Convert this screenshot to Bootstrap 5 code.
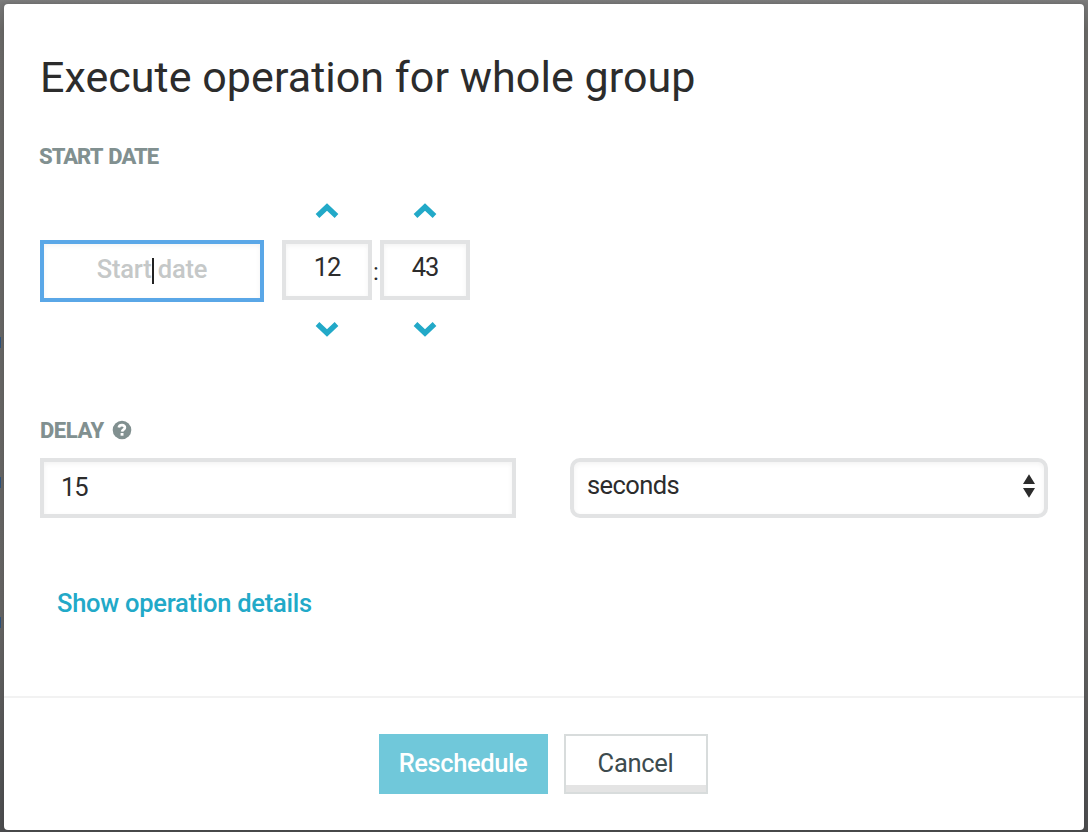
<!DOCTYPE html>
<html lang="en">
<head>
<meta charset="utf-8">
<meta name="viewport" content="width=device-width, initial-scale=1">
<title>Execute operation for whole group</title>
<link href="https://cdn.jsdelivr.net/npm/bootstrap@5.3.0/dist/css/bootstrap.min.css" rel="stylesheet">
<style>
  body { height: 832px; overflow: hidden; padding: 4px 4px 2px; font-family: Roboto, "Liberation Sans", sans-serif; font-size: 25.5px; color: #2c2c2c;
    background: linear-gradient(#2d5079, #2d5079) 0 337px / 1px 11px no-repeat, linear-gradient(#2d5079, #2d5079) 0 477px / 1px 11px no-repeat, linear-gradient(#2d5079, #2d5079) 0 617px / 1px 11px no-repeat,
      linear-gradient(#7c7c7c 0, #777 4px, #6a6967 30px, #656463 75%, #4b4c4e 100%); }
  .modal-content { height: 826px; border: 0; border-radius: 4px; background: #fff; box-shadow: 0 0 5px rgba(0,0,0,.15); }
  .modal-body { padding: 0 36px; }
  .modal-footer { height: 134px; border-top: 2px solid #f2f2f2; padding: 0 2px 0 0; gap: 16px; }
  .modal-footer > * { margin: 0; }
  .modal-title { margin-top: 49px; font-size: 43px; font-weight: 400; line-height: 48px; white-space: nowrap; }

  .section-label { font-size: 22px; font-weight: 800; line-height: 26px; color: #819090; }
  .start-label { margin: 43px 0 0 -1px; }
  .delay-label { margin-top: 77px; }
  .help { margin: -1px 0 1px 8px; }

  .form-control, .form-select { height: 60px; border: 4px solid #e2e3e4; border-radius: 0; color: #2c2c2c; font-size: inherit; line-height: 50px; padding: 0; background: #fff; box-shadow: inset 0 2px 5px rgba(0,0,0,.05); }
  .start-row { margin-top: 32px; height: 139px; }
  .date-box { width: 224px; height: 62px; margin-top: 38px; border-color: #5aa7e7; color: #c5c8c8; line-height: 51px; font-weight: 500; letter-spacing: -.2px; }
  .caret-bar { width: 2px; height: 26px; background: #222; left: 108px; top: 14px; }
  .time-col { width: 90px; }
  .date-box + .time-col { margin-left: 18px; }
  .time-box { width: 90px; margin: 21px 0 20px; line-height: 47px; }
  .chev { width: 24px; height: 16px; margin-top: 1px; display: block; flex: none; }
  .chev path { fill: none; stroke: #22a9c8; stroke-width: 5.4; }
  .colon { width: 8px; margin-top: 54px; line-height: 32px; font-size: 24px; }

  .delay-row { margin-top: 14px; }
  .amount-box { width: 476px; padding-left: 17px; }
  .unit-box { width: 478px; padding: 0 8px 6px 13px; border-radius: 10px; }
  .unit-name { letter-spacing: -.6px; }
  .sorter { margin-top: 2px; }
  .details { margin: 69px 0 0 17px; line-height: 32px; color: #22a9c8; font-weight: 500; text-decoration: none; letter-spacing: -.26px; }

  .btn { height: 60px; border-radius: 0; padding: 0 0 2px; font-size: inherit; line-height: 54px; }
  .btn-main { width: 169px; background: #70c8da; color: #fff; font-weight: 500; border: 2px solid #70c8da; letter-spacing: -.4px; }
  .btn-plain { width: 144px; border: 2px solid #d8dcdc; color: #3d4b4e; background: #fff; box-shadow: inset 0 -7px #e4e4e4; letter-spacing: -.3px; }
  .num { letter-spacing: -1px; }
  .title-text { letter-spacing: .05px; }
  .start-text { letter-spacing: -1px; word-spacing: 2px; }
  .delay-text { letter-spacing: -.4px; }
</style>
</head>
<body>
<div class="modal-content">
  <div class="modal-body">
    <h1 class="modal-title"><span class="title-text">Execute operation for whole group</span></h1>
    <div class="section-label start-label"><span class="start-text">START DATE</span></div>
    <div class="start-row d-flex">
      <div class="date-box form-control position-relative text-center"><span>Start date</span><span class="caret-bar position-absolute"></span></div>
      <div class="time-col d-flex flex-column align-items-center">
        <svg class="chev" viewBox="0 0 24 16"><path d="M2.500 13 12 4l9.500 9"/></svg>
        <div class="time-box form-control text-center"><span class="num">12</span></div>
        <svg class="chev" viewBox="0 0 24 16"><path d="m2.500 3 9.500 9 9.500-9"/></svg>
      </div>
      <div class="colon text-center">:</div>
      <div class="time-col d-flex flex-column align-items-center">
        <svg class="chev" viewBox="0 0 24 16"><path d="M2.500 13 12 4l9.500 9"/></svg>
        <div class="time-box form-control text-center"><span class="num">43</span></div>
        <svg class="chev" viewBox="0 0 24 16"><path d="m2.500 3 9.500 9 9.500-9"/></svg>
      </div>
    </div>
    <div class="section-label delay-label d-flex align-items-center"><span class="delay-text">DELAY</span>
      <svg class="help" width="20" height="20" viewBox="0 0 20 20"><circle cx="10" cy="10" r="9.300" fill="#819090"/><path d="M6.800 7.500C7.500 4.300 13 4.500 12.900 7.600c0 2.200-2.700 2-2.800 4" fill="none" stroke="#fff" stroke-width="2.700"/><path d="M8.600 13h2.900v2.700H8.600z" fill="#fff"/></svg>
    </div>
    <div class="delay-row d-flex justify-content-between">
      <div class="form-control amount-box"><span class="num">15</span></div>
      <div class="form-select unit-box d-flex align-items-center justify-content-between"><span class="unit-name">seconds</span>
        <svg class="sorter" width="14" height="26" viewBox="0 0 14 26"><path d="M1 11 7 1.300 13 11zM1 15h12L7 24.700z" fill="#2c2c2c"/></svg>
      </div>
    </div>
    <a class="details d-inline-block" href="#">Show operation details</a>
  </div>
  <div class="modal-footer justify-content-center">
    <button class="btn btn-main">Reschedule</button>
    <button class="btn btn-plain">Cancel</button>
  </div>
</div>
<script src="https://cdn.jsdelivr.net/npm/bootstrap@5.3.0/dist/js/bootstrap.bundle.min.js"></script>
</body>
</html>
